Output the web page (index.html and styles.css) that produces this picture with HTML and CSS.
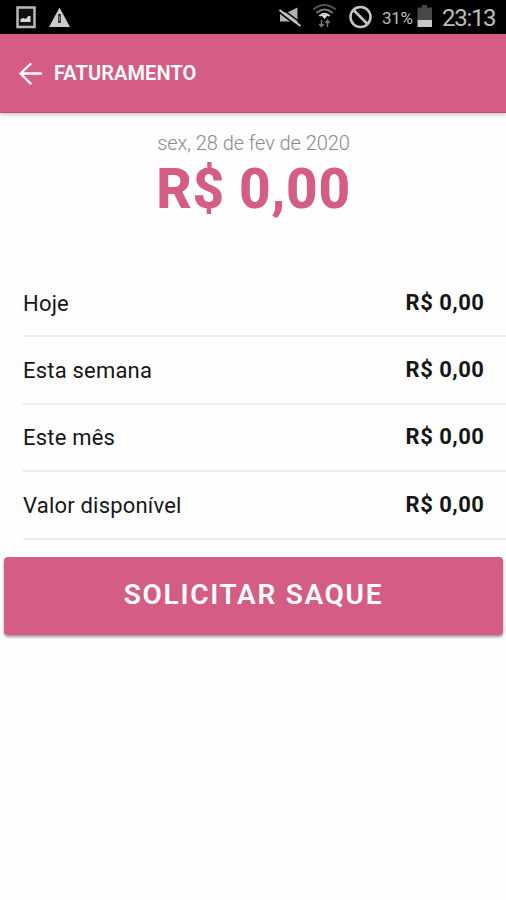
FILE: index.html
```html
<!DOCTYPE html>
<html lang="pt-BR">
<head>
<meta charset="utf-8">
<title>Faturamento</title>
<link rel="stylesheet" href="styles.css">
</head>
<body>
<div class="status">
  <svg class="status-left" width="80" height="34" viewBox="0 0 80 34">
    <path d="M17.500 7.500h17v19.500h-17z" fill="#111" stroke="#b8b8b8" stroke-width="2.500"/>
    <path d="M20.500 22v-3l3-1 2 1 3-3h2v6z" fill="#d8d8d8"/>
    <path d="M59.500 7.500 70 27H49z" fill="#ccc"/>
    <path d="M59.500 14v9" stroke="#222" stroke-width="2.600"/>
    <path d="M59.500 16v5" stroke="#777" stroke-width="1"/>
  </svg>
  <svg class="status-icons" width="102" height="34" viewBox="274 0 102 34">
    <path d="M280 12.500h7l10.500-5V24l-8-2.500H280z" fill="#b0b0b0"/>
    <path d="m278 11.500 21 16M281 8l20 15" stroke="#000" stroke-width="1.500"/>
    <path d="m279.500 10 21 16" stroke="#c4c4c4" stroke-width="2.200"/>
    <path d="m279 12 20 15.300" stroke="#111" stroke-width="1.300"/>
    <g fill="none" stroke-linecap="round">
      <path d="M314 9q10.500-8 21 0" stroke="#555" stroke-width="2"/>
      <path d="M317 12.500q7.500-6 15 0" stroke="#777" stroke-width="2"/>
      <path d="M320 15.500q4.500-3.500 9 0" stroke="#ccc" stroke-width="2"/>
    </g>
    <path d="m321 15 3.500 4 3.500-4z" fill="#ddd"/>
    <path d="M321.500 20v6m-2.200-2 2.200 2.500 2.200-2.500M327.500 27v-6m-2.200 2 2.200-2.500 2.200 2.500" fill="none" stroke="#777" stroke-width="1.500"/>
    <circle cx="360.500" cy="17" r="10" fill="none" stroke="#c4c4c4" stroke-width="2.600"/>
    <path d="m353.500 10 14 14" stroke="#c4c4c4" stroke-width="2.600"/>
  </svg>
  <span class="percent">31%</span>
  <svg class="battery" width="16" height="34" viewBox="0 0 16 34">
    <path d="M5 5h5v2.500h5V20H.500V7.500H5z" fill="#484848"/>
    <path d="M.500 20H15v7H.500z" fill="#c8c8c8"/>
  </svg>
  <span class="clock">23:13</span>
</div>
<header class="bar">
  <svg width="24" height="24" viewBox="0 0 24 24" fill="none" stroke="#fff" stroke-width="2.400" stroke-linecap="round" stroke-linejoin="round">
    <path d="M23 12.500H2.500M12.500 3 2.500 12.500l10 10"/>
  </svg>
  <h1 class="title">FATURAMENTO</h1>
</header>
<main>
  <section class="summary">
    <div class="date">sex, 28 de fev de 2020</div>
    <div class="total">R$ 0,00</div>
  </section>
  <ul class="list">
    <li class="row"><span class="label">Hoje</span><b class="value">R$ 0,00</b></li>
    <li class="row"><span class="label">Esta semana</span><b class="value">R$ 0,00</b></li>
    <li class="row"><span class="label">Este mês</span><b class="value">R$ 0,00</b></li>
    <li class="row"><span class="label">Valor disponível</span><b class="value">R$ 0,00</b></li>
  </ul>
  <button class="action">SOLICITAR SAQUE</button>
</main>
</body>
</html>
```
FILE: styles.css
```css
* { box-sizing: border-box; }
body {
  margin: 0;
  min-height: 900px;
  background: #fefefe;
  color: #161616;
  font-family: Roboto, "Liberation Sans", sans-serif;
  overflow: hidden;
}
.status {
  display: flex;
  height: 34px;
  background: #000;
  color: #bdbdbd;
  line-height: 36px;
}
.status svg { flex: none; }
.status-icons { margin-left: 194px; }
.percent {
  width: 41px;
  padding-left: 6px;
  font-size: 17px;
  letter-spacing: -0.3px;
  white-space: nowrap;
}
.clock {
  padding-left: 9px;
  font-size: 24px;
  letter-spacing: -1.300px;
  white-space: nowrap;
}
.bar {
  display: flex;
  align-items: center;
  height: 79px;
  padding-left: 18px;
  background: #d45c85;
  border-bottom: 1px solid #bd4b73;
  box-shadow: 0 1px 5px rgba(0, 0, 0, .3);
}
.title {
  margin: 0 0 0 12px;
  color: #fff;
  font-size: 20px;
  font-weight: 600;
  line-height: 24px;
  letter-spacing: .1px;
}
.summary {
  height: 157px;
  padding-top: 18px;
  text-align: center;
}
.date {
  padding-left: 1px;
  color: #8a8a8a;
  font-size: 20px;
  font-weight: 350;
  line-height: 24px;
  letter-spacing: -.07px;
}
.total {
  padding-left: 1px;
  color: #d45c85;
  font-size: 55px;
  font-weight: 800;
  line-height: 69px;
  letter-spacing: .6px;
}
.list {
  margin: 0 0 0 23px;
  padding: 0;
  list-style: none;
}
.row {
  display: flex;
  align-items: center;
  justify-content: space-between;
  height: 67.400px;
  padding-right: 22px;
  border-bottom: 2px solid #ececec;
}
.label {
  padding-top: 2px;
  font-size: 22px;
  line-height: 26px;
  letter-spacing: .2px;
}
.value {
  margin-right: -.5px;
  font-size: 22px;
  line-height: 26px;
  letter-spacing: .5px;
}
.action {
  display: block;
  width: 499px;
  height: 78px;
  margin: 17.400px 0 0 4px;
  padding: 0 0 2px;
  border: 0;
  border-radius: 4px;
  background: #d45c85;
  box-shadow: 0 2px 3px rgba(0, 0, 0, .4);
  color: #fff;
  font: 600 28px/34px Roboto, "Liberation Sans", sans-serif;
  letter-spacing: 1.700px;
}
```
